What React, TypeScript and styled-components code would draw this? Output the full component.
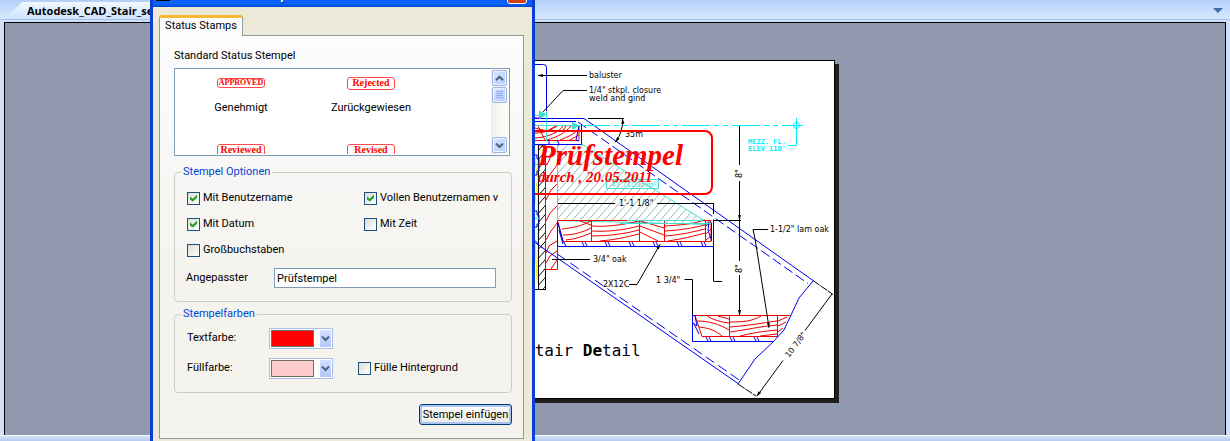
import React, { useState } from "react";
import styled, { createGlobalStyle } from "styled-components";

const GlobalStyle = createGlobalStyle`
  *, *::before, *::after { box-sizing: border-box; }
  html, body { margin: 0; }
  body {
    font-family: Roboto, "Liberation Sans", sans-serif;
    font-size: 11px;
    line-height: 14px;
    color: #000;
    overflow: hidden;
  }
  button, input, select { font: inherit; color: inherit; margin: 0; }
`;

/* ---------- document window ---------- */

const Workspace = styled.div`
  position: relative;
  min-height: 100vh;
  display: flex;
  flex-direction: column;
  overflow: hidden;
  background: #cfe0fa;
`;

const DocumentBar = styled.header`
  display: flex;
  align-items: flex-end;
  justify-content: space-between;
  height: 20px;
  padding: 0 6px 0 5px;
  background: linear-gradient(#b4d0f8, #d8e9ff);
  border-bottom: 1px solid #a9bfe4;
`;

const DocumentTab = styled.div`
  display: flex;
  align-items: center;
  height: 17px;
  width: 190px;
  padding-left: 22px;
  font-family: "Open Sans", "Noto Sans", sans-serif;
  font-weight: 700;
  background: linear-gradient(#f2f8ff, #cfe2fd);
  clip-path: polygon(0 100%, 17px 0, 100% 0, 100% 100%);
  white-space: nowrap;
`;

const TabListButton = styled.button`
  display: flex;
  align-items: center;
  justify-content: center;
  width: 12px;
  height: 18px;
  padding: 0;
  border: 0;
  background: none;
`;

const Canvas = styled.main`
  flex: 1;
  display: flex;
  justify-content: center;
  align-items: flex-start;
  margin: 2px 4px 0 4px;
  padding: 37px 0 33px;
  background: #9199ae;
  border: solid #000;
  border-width: 1px 1px 0 1px;
`;

const StatusEdge = styled.footer`
  height: 6px;
  border-top: 1px solid #f4f6fb;
  background: linear-gradient(#d6e4fb, #b3cbf0);
`;

const Sheet = styled.div`
  display: flex;
  background: #fff;
  border: 1px solid #000;
  box-shadow: 4px 4px 0 #231f20;
  overflow: hidden;
`;

/* ---------- dialog ---------- */

const Dialog = styled.section`
  position: absolute;
  top: -23px;
  left: 150px;
  width: 385px;
  border: solid #0a3fd6;
  border-width: 0 3px;
  background: #ece9d8;
`;

const TitleBar = styled.div`
  display: flex;
  align-items: flex-end;
  gap: 5px;
  height: 30px;
  padding: 0 5px 5px 3px;
  background: linear-gradient(#0a50e6, #0a62fb 90%, #0447d0);
  color: #fff;
`;

const TitleIcon = styled.span`
  width: 14px;
  height: 16px;
  margin-bottom: 1px;
  background: #000;
`;

const Title = styled.h1`
  flex: 1;
  margin: 0;
  font-size: 14px;
  line-height: 16px;
  font-weight: 700;
  text-shadow: 1px 1px 0 #0a1883;
`;

const CloseButton = styled.button`
  width: 20px;
  height: 21px;
  padding: 0;
  margin-bottom: -2px;
  border: 1px solid #fff;
  border-radius: 3px;
  background: linear-gradient(#e8744e, #cf3a12);
`;

const DialogBody = styled.div`
  padding: 8px 8px 8px 6px;
`;

const Tab = styled.button`
  display: block;
  position: relative;
  z-index: 1;
  width: 84px;
  height: 21px;
  margin-bottom: -1px;
  padding: 0 0 2px;
  text-align: center;
  background: #fcfcfe;
  border: 1px solid #919b9c;
  border-top: 3px solid #fbb92f;
  border-bottom: 0;
  border-radius: 3px 3px 0 0;
`;

const TabPage = styled.div`
  display: flex;
  flex-direction: column;
  padding: 13px 11px 13px 14px;
  border: 1px solid #919b9c;
  background: linear-gradient(#fcfcfe, #f4f3ee 60%);
`;

const ListTitle = styled.h2`
  margin: 0 0 5px;
  font-size: 11px;
  line-height: 14px;
  font-weight: 400;
`;

const StampBox = styled.div`
  display: flex;
  height: 88px;
  width: 336px;
  padding: 1px;
  border: 1px solid #7f9db9;
  background: #fff;
  overflow: hidden;
`;

const StampGrid = styled.div`
  flex: 1;
  display: grid;
  grid-template-columns: 130px 130px;
  grid-auto-rows: 67px;
  overflow: hidden;
`;

const StampCell = styled.div`
  display: flex;
  flex-direction: column;
  align-items: center;
  gap: 10px;
  padding-top: 5px;
`;

const StampSlot = styled.div`
  display: flex;
  align-items: center;
  height: 16px;
`;

const StampPreview = styled.div<{ $small?: boolean }>`
  width: 48px;
  height: ${(p) => (p.$small ? 10 : 13)}px;
  border: 1px solid #ff4a4a;
  border-radius: 3px;
  color: #f00;
  font-family: "Liberation Serif", serif;
  font-size: ${(p) => (p.$small ? 8 : 10)}px;
  line-height: ${(p) => (p.$small ? 8 : 10)}px;
  font-weight: 700;
  text-align: center;
  white-space: nowrap;
`;

const ScrollTrack = styled.div`
  display: flex;
  flex-direction: column;
  gap: 1px;
  width: 17px;
  padding: 0 1px 1px;
  background: linear-gradient(90deg, #f0efea, #fefefb);
`;

const ScrollButton = styled.button<{ $end?: boolean }>`
  display: flex;
  align-items: center;
  justify-content: center;
  width: 15px;
  height: 16px;
  margin-top: ${(p) => (p.$end ? "auto" : "0")};
  padding: 0;
  border: 1px solid #9bb4ea;
  border-radius: 2px;
  background: linear-gradient(135deg, #dbe6ff, #b5cbfb);
  box-shadow: inset 0 0 0 1px #eef3ff;
`;

const Group = styled.fieldset<{ $top: number }>`
  min-width: 0;
  margin: ${(p) => p.$top}px 0 0;
  padding: 0;
  border: 1px solid #cfcebd;
  border-radius: 4px;
`;

const Legend = styled.legend`
  margin-left: 6px;
  padding: 0 2px;
  color: #0046d5;
`;

const OptionGrid = styled.div`
  display: grid;
  grid-template-columns: 177px 1fr;
  grid-auto-rows: 26px;
  padding: 6px 13px 0 12px;
`;

const CheckLabel = styled.label`
  display: flex;
  align-items: center;
  gap: 3px;
  min-width: 0;
  overflow: hidden;
  white-space: nowrap;
`;

const CheckBox = styled.input.attrs({ type: "checkbox" })`
  appearance: none;
  flex: none;
  width: 13px;
  height: 13px;
  border: 1px solid #1c5180;
  background: linear-gradient(135deg, #dcdcd7, #fff);
  &:checked::after {
    content: "";
    display: block;
    width: 7px;
    height: 7px;
    margin: 2px;
    background: #21a121;
    clip-path: polygon(0 30%, 40% 60%, 100% 0, 100% 45%, 40% 100%, 0 72%);
  }
`;

const FieldRow = styled.div`
  display: grid;
  grid-template-columns: 88px 1fr;
  align-items: center;
  padding: 5px 15px 13px 11px;
`;

const TextInput = styled.input`
  width: 100%;
  height: 20px;
  padding: 0 2px;
  border: 1px solid #7f9db9;
  background: #fff;
`;

const ColorRows = styled.div`
  display: grid;
  grid-template-columns: 83px 88px 1fr;
  grid-auto-rows: 30px;
  align-items: center;
  padding: 2px 12px 9px 12px;
`;

const ColorBox = styled.div`
  display: grid;
  width: 64px;
  height: 21px;
  margin-left: -1px;
  > * { grid-area: 1 / 1; }
`;

const ColorSelect = styled.select<{ $color: string }>`
  appearance: none;
  width: 64px;
  height: 21px;
  padding: 0;
  border: 1px solid #a9bfec;
  border-radius: 0;
  background:
    linear-gradient(${(p) => p.$color}, ${(p) => p.$color}) 2px 2px / 41px 15px no-repeat,
    linear-gradient(#6f6f68, #6f6f68) 1px 1px / 43px 17px no-repeat,
    linear-gradient(#d3e0fe, #b2c8fa) 50px 1px / 11px 17px no-repeat,
    #fff;
`;

const ColorArrow = styled.span`
  display: flex;
  align-items: center;
  justify-content: center;
  justify-self: end;
  width: 11px;
  margin-right: 2px;
  pointer-events: none;
`;

const InsertButton = styled.button`
  align-self: flex-end;
  width: 93px;
  height: 21px;
  margin-top: 11px;
  padding: 0;
  border: 1px solid #003c74;
  border-radius: 3px;
  background: linear-gradient(#fff, #ecebe5);
  box-shadow: inset 0 0 0 2px #a9c4f2;
`;

const Chevron = ({ up }: { up?: boolean }) => (
  <svg width="9" height="7" viewBox="0 0 9 7" fill="none" stroke="#4d6185" strokeWidth="2">
    <path d={up ? "M1 5.2 4.5 1.7 8 5.2" : "M1 1.5 4.5 5 8 1.5"} />
  </svg>
);

/* ---------- drawing ---------- */

const BLUE = "#0000f0";
const RED = "#f00000";
const TEAL = "#40e0d0";
const CYAN = "#00f0ff";

const DrawingSvg = styled.svg`
  display: block;
  flex: none;
  .cad { font-family: "DejaVu Sans", sans-serif; font-size: 8px; fill: #000; }
  .note { font-family: "DejaVu Sans Mono", monospace; font-size: 7px; font-weight: 700; fill: ${CYAN}; }
  .title { font-family: "DejaVu Sans Mono", monospace; font-size: 16px; fill: #000; }
  .stamp { font-family: "Liberation Serif", serif; font-weight: 700; font-style: italic; fill: #f00; }
`;

const Drawing = () => (
  <DrawingSvg width="438" height="337" viewBox="396 61 438 337" fill="none" strokeWidth="1" role="img" aria-label="Stair Detail">
    <defs>
      <pattern id="areaHatch" width="8" height="9" patternUnits="userSpaceOnUse">
        <path d="M-1 10 9 -1" stroke="#8fb8b2" />
      </pattern>
      <pattern id="wallHatch" width="8" height="9" patternUnits="userSpaceOnUse">
        <path d="M-1 10 9 -1" stroke="#000" />
      </pattern>
      <marker id="arrow" markerWidth="6" markerHeight="4" refX="5" refY="2" orient="auto-start-reverse">
        <path d="M0 .5 6 2 0 3.500Z" fill="#000" />
      </marker>
    </defs>

    {/* wall section */}
    <rect x="520" y="145" width="18" height="137" stroke="#f0f000" />
    <path d="M530 145v137M534 147l3 30M537 182l-3 30M534 220l3 60" stroke="#f0f000" />
    <path d="M520 289.500h18" stroke="#000" />
    <rect x="538.500" y="145" width="7" height="144.500" fill="url(#wallHatch)" stroke="#000" />
    <path d="M535 155h2v4h2v12h-2v4h-2M535 211h2v4h2v9h-2v3h-2" stroke={BLUE} />
    <path d="M535 164.500h4M535 218.500h4" stroke={CYAN} />
    <path d="M545.500 145v124.500h12V145" stroke={RED} />
    <path d="M546 165c5-5 5-12 6-19M546 182l5-9 6-8M546 200l5-10 6-6M546 221l4-8 7-7M546 240l5-9 6-8M546 253l3-7 8-5M546 263l4-7 7-5M551 269l6-9" stroke={RED} />

    {/* measured area */}
    <path d="M557.500 144.500h25l128 80-153-4Z" fill="url(#areaHatch)" stroke={TEAL} />

    {/* top tread */}
    <path d="M535 125.500h44v15h-44" stroke={RED} />
    <path d="M535 128l12 3 9-5M535 133c10 0 16-3 22-7M535 138c14-1 24-6 28-12M547 140c10-3 18-7 24-14M560 140c8-3 14-6 19-11M570 140l9-5M538 126l7 14M566 126l-4 6" stroke={RED} />
    <path d="M535 118.500h49L813 280.500M535 121.500h41M581.500 124v20.500H535M579 126l-3 14 3 1M557 140l2 4M549 140v4" stroke={BLUE} />
    <path d="M578 122 808 283.500" stroke={BLUE} strokeDasharray="10 4" />
    <path d="M520 64.500h23.500q3 0 3 3V118" stroke={BLUE} />
    <path d="M546.500 111v30M535 125.500h43M535 115.500h9" stroke={TEAL} />
    <path d="M572 122v8l8-4.500ZM539 110.500v9l8-5Z" fill={TEAL} />
    <path d="M535 117.500h5" stroke="#f0f" strokeDasharray="2 1" />
    <path d="M582 125.500h214" stroke={CYAN} strokeDasharray="28 4 5 4 5 4" />

    {/* main tread */}
    <path d="M558 220.500h153v21H563L558 222M591.500 220v21M639.500 220v21M664.500 220v21M705.500 220v21" stroke={RED} />
    <path d="M562 229c10-1 20-3 29-8M563 235c11 0 20-3 28-7M566 240c10-1 18-4 25-7M580 221l11 4M592 226c15 1 30-1 47-5M592 231c16 1 32-1 47-5M592 236c16 0 33-2 47-6M600 241c14-1 27-4 39-7M640 226l24 9M640 221l14 4 10 3M640 232l18 9M665 226c16-1 28-2 40-6M665 231c16-1 28-3 40-6M665 236c15-1 28-4 40-7M668 241c14-2 26-5 37-8M706 226l5-4M706 234l5-5M706 240l5-4" stroke={RED} />
    <path d="M557.500 221v25.500h156V219.500M558 223l5 18 3 5M559 230l4 14M711.500 223v18M709 221l-1 9 3 9" stroke={BLUE} />
    <path d="M582 242l2 4M585 242l2 4M605 242l2 4M608 242l2 4M629 242l2 4M632 242l2 4M653 242l2 4M656 242l2 4M677 242l2 4M680 242l2 4M701 242l2 4M704 242l2 4" stroke={BLUE} />
    <path d="M620 223.500h91M627 220.500h76" stroke={TEAL} />

    {/* lower tread */}
    <path d="M695 315.500h96M702 336.500h76M695 315.500l7 21M729.500 316v20M777.500 316v20" stroke={RED} />
    <path d="M697 321c12 0 22 3 32 9M699 327c11 1 17 4 23 9M707 316c6 4 14 6 22 7M718 316l11 3M730 322c15 0 22-1 31-6M730 327c16-1 32-4 47-6M730 332c16-2 32-6 47-7M740 336c12-3 24-5 37-6M760 336l17-2M778 321l9-4M778 326l8-4M778 332l5-4" stroke={RED} />
    <path d="M692.500 315v26.500h81M695 316l2 10-4-3M694 324l5 10M706 337l2 4M709 337l2 4M730 337l2 4M733 337l2 4M754 337l2 4M757 337l2 4M693 315.500h3" stroke={BLUE} />
    <path d="M813 281l-14 17-15 32-11 12-18 17-17 25" stroke={BLUE} />
    <path d="M535 242.500 738 383.500" stroke={BLUE} />
    <path d="M558 254.500 740 380.500" stroke={BLUE} strokeDasharray="10 5" />
    <path d="M535 240.500l8 8" stroke={BLUE} strokeDasharray="5 3" />

    {/* dimensions and leaders */}
    <g stroke="#000">
      <path d="M587 75.500h-49" markerEnd="url(#arrow)" />
      <path d="M587 90.500h-24L543 112" />
      <path d="M588 118.500h36" />
      <path d="M622.500 119q1 12-7 23" markerStart="url(#arrow)" markerEnd="url(#arrow)" />
      <path d="M615 203.500h-57M657 203.500h56" />
      <path d="M713.500 203v11M713.500 246v35.500M692.500 315v-35.500h-8M714 281.500h8" />
      <path d="M739.500 165v-39M739.500 181v39" markerEnd="url(#arrow)" />
      <path d="M739.500 261v-40M739.500 275v40" markerEnd="url(#arrow)" />
      <path d="M713 220.500h28" />
      <path d="M590 259.500h-38M629 284.500h8l23-40" markerEnd="url(#arrow)" />
      <path d="M768 229.500h-15l2 9 14 89" markerEnd="url(#arrow)" />
      <path d="M813 280.500l20 14M738 384l18 12" strokeDasharray="8 1" />
      <path d="M805 330.500 832 294M783 360.500 757 396" markerEnd="url(#arrow)" />
      <path d="M560 160.500h-3M600 160.500l-4-2" />
    </g>
    <g className="cad">
      <text x="589" y="78">baluster</text>
      <text x="589" y="93">1/4" stkpl. closure</text>
      <text x="589" y="101">weld and gind</text>
      <text x="625" y="137">35m</text>
      <text x="619" y="206">1'-1 1/8"</text>
      <text x="593" y="262">3/4" oak</text>
      <text x="603" y="287">2X12C</text>
      <text x="656" y="283">1 3/4"</text>
      <text x="770" y="232">1-1/2" lam oak</text>
      <text transform="translate(742 178) rotate(-90)">8"</text>
      <text transform="translate(742 273) rotate(-90)">8"</text>
      <text transform="translate(789 358) rotate(-53)">10 7/8"</text>
    </g>

    {/* level mark */}
    <circle cx="796.500" cy="125.500" r="3" stroke={CYAN} />
    <path d="M789 125.500h14M796.500 118v27.500H788" stroke={CYAN} />
    <text className="note" x="748" y="144">MEZZ. FL.</text>
    <text className="note" x="748" y="151">ELEV 110'</text>

    <text className="title" x="525" y="356">
      Stair <tspan fontWeight="700">De</tspan>tail
    </text>

    <rect x="606.500" y="179.500" width="52" height="9" stroke={TEAL} />
    <text x="611" y="187" fontFamily="Liberation Sans, sans-serif" fontSize="8" fill={TEAL}>47,7103mm²</text>

    {/* status stamp */}
    <rect x="500" y="131" width="212" height="63" rx="7" stroke="#f00" strokeWidth="2" />
    <text className="stamp" x="538" y="165" fontSize="29">Prüfstempel</text>
    <text className="stamp" x="538" y="182" fontSize="15">durch , 20.05.2011</text>
  </DrawingSvg>
);

/* ---------- page ---------- */

const stamps = [
  { label: "Genehmigt", stamp: "APPROVED", small: true },
  { label: "Zurückgewiesen", stamp: "Rejected" },
  { label: "", stamp: "Reviewed" },
  { label: "", stamp: "Revised" },
];

const options = [
  { label: "Mit Benutzername", on: true },
  { label: "Vollen Benutzernamen verwenden", on: true },
  { label: "Mit Datum", on: true },
  { label: "Mit Zeit", on: false },
  { label: "Großbuchstaben", on: false },
];

const ColorPicker = ({ id, color }: { id: string; color: string }) => (
  <ColorBox>
    <ColorSelect id={id} $color={color} defaultValue={color}>
      <option value={color}></option>
    </ColorSelect>
    <ColorArrow>
      <Chevron />
    </ColorArrow>
  </ColorBox>
);

export default function App() {
  const [text, setText] = useState("Prüfstempel");
  return (
    <>
      <GlobalStyle />
      <Workspace>
        <DocumentBar>
          <DocumentTab>Autodesk_CAD_Stair_section</DocumentTab>
          <TabListButton aria-label="Dokumentliste">
            <svg width="10" height="5" viewBox="0 0 10 5">
              <path d="M0 0h10L5 5Z" fill="#3f6fae" />
            </svg>
          </TabListButton>
        </DocumentBar>
        <Canvas>
          <Sheet>
            <Drawing />
          </Sheet>
        </Canvas>
        <StatusEdge />

        <Dialog role="dialog" aria-labelledby="dialog-title">
          <TitleBar>
            <TitleIcon />
            <Title id="dialog-title">Kommentarstempel</Title>
            <CloseButton aria-label="Schließen" />
          </TitleBar>
          <DialogBody>
            <Tab role="tab" aria-selected="true">Status Stamps</Tab>
            <TabPage>
              <ListTitle>Standard Status Stempel</ListTitle>
              <StampBox>
                <StampGrid>
                  {stamps.map((s) => (
                    <StampCell key={s.stamp}>
                      <StampSlot>
                        <StampPreview $small={s.small}>{s.stamp}</StampPreview>
                      </StampSlot>
                      {s.label && <span>{s.label}</span>}
                    </StampCell>
                  ))}
                </StampGrid>
                <ScrollTrack>
                  <ScrollButton aria-label="Nach oben">
                    <Chevron up />
                  </ScrollButton>
                  <ScrollButton aria-label="Bildlauf">
                    <svg width="7" height="8" viewBox="0 0 7 8" stroke="#8fadf0">
                      <path d="M0 .5h7M0 2.500h7M0 4.500h7M0 6.500h7" />
                    </svg>
                  </ScrollButton>
                  <ScrollButton $end aria-label="Nach unten">
                    <Chevron />
                  </ScrollButton>
                </ScrollTrack>
              </StampBox>

              <Group $top={9}>
                <Legend>Stempel Optionen</Legend>
                <OptionGrid>
                  {options.map((o) => (
                    <CheckLabel key={o.label}>
                      <CheckBox defaultChecked={o.on} />
                      {o.label}
                    </CheckLabel>
                  ))}
                </OptionGrid>
                <FieldRow>
                  <label htmlFor="custom">Angepasster</label>
                  <TextInput id="custom" value={text} onChange={(e) => setText(e.target.value)} />
                </FieldRow>
              </Group>

              <Group $top={5}>
                <Legend>Stempelfarben</Legend>
                <ColorRows>
                  <label htmlFor="text-color">Textfarbe:</label>
                  <ColorPicker id="text-color" color="#ff0000" />
                  <span />
                  <label htmlFor="fill-color">Füllfarbe:</label>
                  <ColorPicker id="fill-color" color="#ffcccc" />
                  <CheckLabel>
                    <CheckBox />
                    Fülle Hintergrund
                  </CheckLabel>
                </ColorRows>
              </Group>

              <InsertButton>Stempel einfügen</InsertButton>
            </TabPage>
          </DialogBody>
        </Dialog>
      </Workspace>
    </>
  );
}
